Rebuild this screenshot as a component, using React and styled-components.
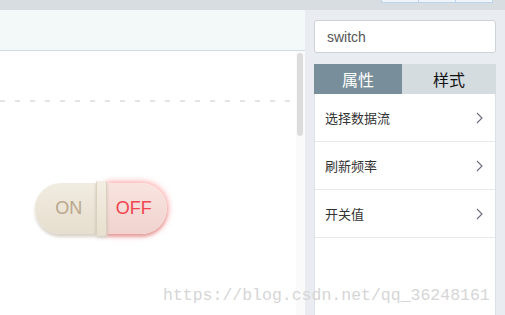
import React from "react";
import styled, { createGlobalStyle } from "styled-components";

const GlobalStyle = createGlobalStyle`
  html, body {
    margin: 0;
    padding: 0;
    overflow: hidden;
    background: #ffffff;
    font-family: "Liberation Sans", Arial, "Noto Sans CJK SC", sans-serif;
  }
`;

const Page = styled.div`
  width: 505px;
  height: 315px;
  display: flex;
  flex-direction: column;
  overflow: hidden;
`;

const TopBar = styled.div`
  height: 10px;
  flex-shrink: 0;
  background: #d7dde0;
  display: flex;
  justify-content: flex-end;
  padding-right: 12px;
`;

const ButtonGroup = styled.div`
  display: flex;
  align-self: flex-start;
`;

const GroupButton = styled.div`
  width: 36px;
  height: 2px;
  background: #eef4fa;
  border: 1px solid #bcd4ee;
  border-top: none;
  & + & {
    border-left: none;
  }
`;

const Main = styled.div`
  flex: 1;
  display: flex;
  min-height: 0;
`;

const Workspace = styled.div`
  width: 305px;
  display: flex;
  flex-direction: column;
`;

const WorkspaceHeader = styled.div`
  height: 40px;
  background: #f3f9f9;
  border-bottom: 1px solid #d0dde0;
`;

const WorkspaceBody = styled.div`
  flex: 1;
  display: flex;
  background: #ffffff;
`;

const Canvas = styled.div`
  flex: 1;
  position: relative;
  padding-top: 49px;
`;

const DashLine = styled.div`
  width: 291px;
  height: 2px;
  background: repeating-linear-gradient(
    to right,
    #e3e3e3 0 5px,
    transparent 5px 15px
  );
`;

const ScrollTrack = styled.div`
  width: 9px;
  background: #fafafa;
  padding: 2px 2px 0 1px;
  box-sizing: border-box;
`;

const ScrollThumb = styled.div`
  height: 83px;
  border-radius: 3px;
  background: #dcdcdc;
`;

const SwitchWrap = styled.div`
  margin: 80px 0 0 35px;
  display: flex;
  align-items: center;
  width: 132px;
  height: 52px;
`;

const Half = styled.div`
  height: 51px;
  display: flex;
  align-items: center;
  justify-content: center;
  box-sizing: border-box;
  font-size: 18px;
  font-family: "Liberation Sans", Arial, sans-serif;
  color: ${(p) => (p.$active ? "#f0454f" : "#b9a78e")};
  background: ${(p) =>
    p.$active
      ? "linear-gradient(#f9e4e0, #f0d3ce)"
      : "linear-gradient(#f1ece1, #e6dece)"};
  border-radius: ${(p) => (p.$side === "left" ? "26px 0 0 26px" : "0 26px 26px 0")};
  box-shadow: ${(p) =>
    p.$active
      ? "0 0 6px 1px rgba(255, 70, 70, 0.55), 0 3px 3px rgba(150, 90, 80, 0.3)"
      : "0 3px 3px rgba(130, 110, 80, 0.3)"};
  padding-left: ${(p) => (p.$side === "left" ? "7px" : "0")};
  padding-right: ${(p) => (p.$side === "right" ? "7px" : "0")};
  width: ${(p) => (p.$side === "left" ? "61px" : "60px")};
`;

const Knob = styled.div`
  position: relative;
  z-index: 1;
  width: 12px;
  height: 55px;
  box-sizing: border-box;
  border-radius: 2px;
  background: linear-gradient(#f3eee3, #e7e0cf);
  border-left: 1px solid #d9d0bd;
  border-right: 1px solid #d9d0bd;
  box-shadow: 0 2px 3px rgba(110, 90, 60, 0.3);
`;

const Watermark = styled.div`
  position: absolute;
  left: 163px;
  top: 286px;
  font-family: "Liberation Mono", "Courier New", monospace;
  font-size: 16.5px;
  color: #d6d6d6;
  white-space: nowrap;
  pointer-events: none;
  z-index: 5;
`;

const Panel = styled.div`
  flex: 1;
  background: #e9edf1;
  padding: 10px 9px 0 9px;
  display: flex;
  flex-direction: column;
`;

const SearchBox = styled.div`
  height: 33px;
  box-sizing: border-box;
  background: #ffffff;
  border: 1px solid #cdd2d6;
  border-radius: 3px;
  padding: 0 12px;
  display: flex;
  align-items: center;
  font-size: 14px;
  color: #555555;
`;

const Tabs = styled.div`
  margin-top: 11px;
  display: flex;
  height: 30px;
`;

const Tab = styled.div`
  flex: ${(p) => (p.$active ? "0 0 88px" : "1")};
  display: flex;
  align-items: center;
  justify-content: center;
  font-size: 16px;
  font-family: "Noto Sans CJK SC", sans-serif;
  background: ${(p) => (p.$active ? "#788f9b" : "#d5dce0")};
  color: ${(p) => (p.$active ? "#ffffff" : "#111111")};
`;

const List = styled.div`
  flex: 1;
  background: #ffffff;
  border-left: 1px solid #dbe1e6;
  border-right: 1px solid #dbe1e6;
`;

const Row = styled.div`
  height: 48px;
  box-sizing: border-box;
  border-bottom: 1px solid #e6e9ee;
  padding: 0 12px 0 10px;
  display: flex;
  align-items: center;
  justify-content: space-between;
  font-size: 13px;
  font-family: "Noto Sans CJK SC", sans-serif;
  color: #333333;
`;

const Chevron = () => (
  <svg width="7" height="12" viewBox="0 0 7 12">
    <polyline points="1,1 6,6 1,11" fill="none" stroke="#6a6a78" strokeWidth="1.1" />
  </svg>
);

const items = ["选择数据流", "刷新频率", "开关值"];

export default function App() {
  return (
    <Page>
      <GlobalStyle />
      <TopBar>
        <ButtonGroup>
          <GroupButton />
          <GroupButton />
          <GroupButton />
        </ButtonGroup>
      </TopBar>
      <Main>
        <Workspace>
          <WorkspaceHeader />
          <WorkspaceBody>
            <Canvas>
              <DashLine />
              <SwitchWrap>
                <Half $side="left">ON</Half>
                <Knob />
                <Half $side="right" $active>
                  OFF
                </Half>
              </SwitchWrap>
            </Canvas>
            <ScrollTrack>
              <ScrollThumb />
            </ScrollTrack>
          </WorkspaceBody>
        </Workspace>
        <Panel>
          <SearchBox>switch</SearchBox>
          <Tabs>
            <Tab $active>属性</Tab>
            <Tab>样式</Tab>
          </Tabs>
          <List>
            {items.map((t) => (
              <Row key={t}>
                {t}
                <Chevron />
              </Row>
            ))}
          </List>
        </Panel>
      </Main>
      <Watermark>https://blog.csdn.net/qq_36248161</Watermark>
    </Page>
  );
}
